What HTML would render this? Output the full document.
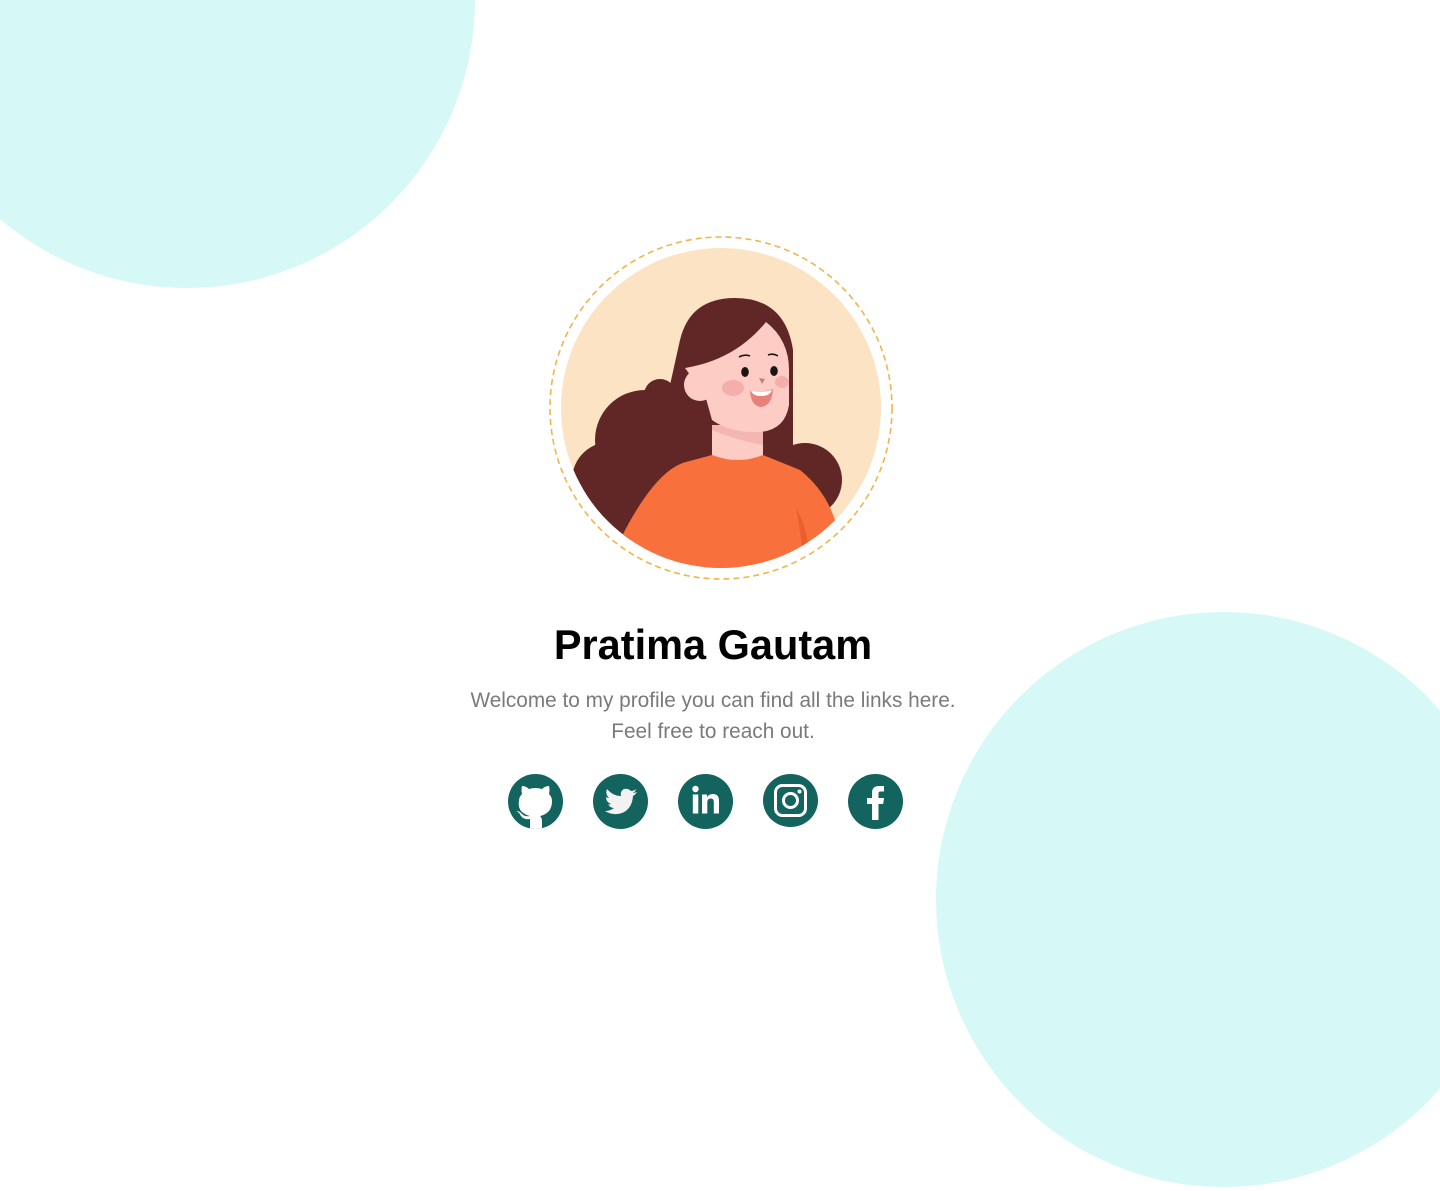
<!DOCTYPE html>
<html><head><meta charset="utf-8"><style>
html,body{margin:0;padding:0;}
body{width:1440px;height:1191px;position:relative;overflow:hidden;background:#fff;font-family:"Liberation Sans",Arial,sans-serif;}
.blob{position:absolute;border-radius:50%;background:#d6f8f7;}
h1{position:absolute;top:620px;left:0;width:1426px;text-align:center;margin:0;font-size:41.5px;font-weight:bold;color:#000;line-height:50px;}
.sub{position:absolute;top:685px;left:0;width:1426px;text-align:center;color:#7a7a7a;font-size:20.8px;line-height:31px;}
.ic{position:absolute;top:774px;}
</style></head><body>
<div class="blob" style="left:-101px;top:-288px;width:576px;height:576px"></div>
<div class="blob" style="left:936px;top:612px;width:575px;height:575px"></div>

<svg style="position:absolute;left:540px;top:230px" width="360" height="360" viewBox="0 0 360 360">
<defs><clipPath id="c"><circle cx="181" cy="178" r="160"/></clipPath></defs>
<circle cx="181" cy="178" r="171" fill="none" stroke="#f0b54a" stroke-width="1.6" stroke-dasharray="6 4"/>
<circle cx="181" cy="178" r="160" fill="#fbe3c4"/>
<g clip-path="url(#c)">
 <circle cx="105" cy="210" r="50" fill="#602726"/>
 <circle cx="70" cy="250" r="38" fill="#602726"/>
 <circle cx="120" cy="165" r="16" fill="#602726"/>
 <circle cx="265" cy="250" r="37" fill="#602726"/>
 <path d="M140 110 Q150 68 195 68 Q245 68 253 120 L253 215 L240 230 L130 240 L120 200 Z" fill="#602726"/>
 <path d="M40 260 L90 235 L140 225 L130 310 L70 310 Z" fill="#602726"/>
 <path d="M172 195 L223 195 L223 232 Q198 238 172 232 Z" fill="#fdcdc5"/>
 <path d="M172 195 L223 195 L223 215 Q195 210 172 200 Z" fill="#f3b6b0"/>
 <path d="M145 138 Q195 130 226 92 Q249 110 249 140 L249 175 Q245 200 220 202 Q190 203 172 190 L165 165 Z" fill="#fdcdc5"/>
 <circle cx="160" cy="155" r="16" fill="#fdcdc5"/>
 <ellipse cx="193" cy="158" rx="11" ry="8" fill="#f5aeac"/>
 <ellipse cx="242" cy="152" rx="7" ry="6" fill="#f5aeac"/>
 <ellipse cx="205" cy="142" rx="3.8" ry="5" fill="#1d1413"/>
 <ellipse cx="234" cy="141" rx="3.8" ry="5" fill="#1d1413"/>
 <path d="M199 127 Q205 124 210 126" stroke="#1d1413" stroke-width="1.6" fill="none"/>
 <path d="M228 125 Q233 123 238 126" stroke="#1d1413" stroke-width="1.6" fill="none"/>
 <path d="M219 148 L225 149 L222 154 Z" fill="#d07d7a"/>
 <path d="M210 161 Q222 163 233 159 Q232 176 221 177 Q211 176 210 161 Z" fill="#e8807c"/>
 <path d="M211 161 Q222 163 232 160 Q230 166 221 166 Q213 166 211 161 Z" fill="#fff"/>
 <path d="M80 310 Q115 240 146 232 L172 225 Q198 235 223 225 L260 240 Q285 260 295 290 L300 360 L70 360 Z" fill="#f8713d"/>
 <path d="M256 278 Q266 295 268 315 L262 318 Q260 298 256 278 Z" fill="#ee5d2d"/>
</g>
</svg>

<h1>Pratima Gautam</h1>
<div class="sub">Welcome to my profile you can find all the links here.<br>Feel free to reach out.</div>

<svg class="ic" style="left:508px" width="55" height="55" viewBox="0 0 55 55">
<defs><clipPath id="g"><circle cx="27.5" cy="27.5" r="27.5"/></clipPath></defs>
<circle cx="27.5" cy="27.5" r="27.5" fill="#13645e"/>
<path clip-path="url(#g)" d="M22 58 L22 45 Q16 46 13 42 Q11 38 8 37 Q12 37 14 40 Q17 43 22 42 Q17 41 13 37 Q10 33 11 27 Q11 23 14 20 Q13 16 14 12 Q18 12 21 15 Q27 13 34 15 Q37 12 41 12 Q42 16 41 20 Q44 23 44 27 Q44 33 41 37 Q37 41 32 42 Q34 44 34 47 L34 58 Z" fill="#fff"/>
</svg>
<svg class="ic" style="left:593px" width="55" height="55" viewBox="0 0 55 55">
<circle cx="27.5" cy="27.5" r="27.5" fill="#13645e"/>
<path d="M44 18 Q41 19 40 19 Q43 17 43 15 Q41 17 38 17 Q35 14 31 15 Q27 17 28 22 Q20 22 14 15 Q12 20 16 24 Q14 24 13 23 Q13 28 18 30 Q16 31 15 30 Q17 34 21 34 Q17 37 12 37 Q20 42 29 39 Q39 35 40 22 Q43 20 44 18 Z" fill="#f2f2f2"/>
</svg>
<svg class="ic" style="left:678px" width="55" height="55" viewBox="0 0 55 55">
<circle cx="27.5" cy="27.5" r="27.5" fill="#13645e"/>
<circle cx="17.5" cy="15" r="3.2" fill="#fff"/>
<rect x="14.8" y="20.5" width="5.5" height="19" fill="#fff"/>
<path d="M24 20.5 L29 20.5 L29 23 Q31 20 35 20 Q41 20 41 27 L41 39.5 L35.8 39.5 L35.8 28 Q35.8 24.5 32.8 24.5 Q29.3 24.5 29.3 28.5 L29.3 39.5 L24 39.5 Z" fill="#fff"/>
</svg>
<svg class="ic" style="left:763px" width="55" height="53" viewBox="0 0 55 53">
<ellipse cx="27.5" cy="26.5" rx="27.5" ry="26.5" fill="#13645e"/>
<rect x="12.5" y="11.5" width="30" height="30" rx="7" fill="none" stroke="#fff" stroke-width="3"/>
<circle cx="27.5" cy="26.5" r="7" fill="none" stroke="#fff" stroke-width="3"/>
<circle cx="36.5" cy="17.5" r="2" fill="#fff"/>
</svg>
<svg class="ic" style="left:848px" width="55" height="55" viewBox="0 0 55 55">
<circle cx="27.5" cy="27.5" r="27.5" fill="#13645e"/>
<path d="M24 46 L24 30 L19 30 L19 24 L24 24 L24 19 Q24 12 31 12 L36 12 L36 17.5 L32.5 17.5 Q30.5 17.5 30.5 19.5 L30.5 24 L36 24 L35.2 30 L30.5 30 L30.5 46 Z" fill="#fff"/>
</svg>
</body></html>
